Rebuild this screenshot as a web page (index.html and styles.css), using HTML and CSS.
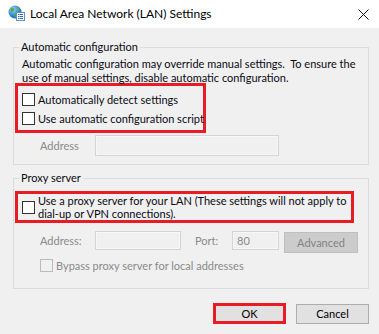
FILE: index.html
```html
<!DOCTYPE html>
<html>
<head>
<meta charset="utf-8">
<link rel="stylesheet" href="styles.css">
</head>
<body>
<div class="window">
  <div class="titlebar">
    <svg class="app-icon" width="17" height="16" viewBox="0 0 17 16">
      <defs>
        <radialGradient id="gl" cx="0.35" cy="0.3" r="0.8">
          <stop offset="0" stop-color="#9fd4f7"/>
          <stop offset="0.6" stop-color="#2f86d0"/>
          <stop offset="1" stop-color="#1a5aa6"/>
        </radialGradient>
      </defs>
      <circle cx="7" cy="7" r="6.5" fill="url(#gl)"/>
      <path d="M3 3.5 C4.5 2.5 6 3 6.5 4.5 C6 6 4.5 6 4 7.5 C3 7 2 5.5 3 3.5 Z" fill="#4caf3c"/>
      <path d="M8 2 C10 2 11.5 3.5 11 5 C10 5.5 9 5 8.5 4 Z" fill="#5bbf48"/>
      <path d="M6 9 C7.5 8.5 8.5 10 8 12 C7 12.5 6 11 6 9 Z" fill="#4caf3c"/>
      <rect x="8.5" y="7.5" width="8" height="8" fill="#fafafa" stroke="#6b8fb8" stroke-width="1"/>
      <rect x="10" y="9" width="1.5" height="1" fill="#2b6cb5"/>
      <rect x="12" y="9" width="3" height="1" fill="#2b6cb5"/>
      <rect x="10" y="11" width="1.5" height="1" fill="#2b6cb5"/>
      <rect x="12" y="11" width="3" height="1" fill="#2b6cb5"/>
      <rect x="10" y="13" width="1.5" height="1" fill="#2b6cb5"/>
      <rect x="12" y="13" width="3" height="1" fill="#2b6cb5"/>
    </svg>
    <span class="title">Local Area Network (LAN) Settings</span>
    <svg class="close" width="11" height="11" viewBox="0 0 11 11">
      <path d="M0.5 0.5 L10.5 10.5 M10.5 0.5 L0.5 10.5" stroke="#111" stroke-width="1"/>
    </svg>
  </div>

  <div class="content">
    <fieldset class="group group-auto">
      <legend>Automatic configuration</legend>
      <p class="desc">Automatic configuration may override manual settings.&nbsp; To ensure the<br>use of manual settings, disable automatic configuration.</p>
      <div class="highlight hl-auto">
        <div class="check"><span class="box"></span><span>Automatically detect settings</span></div>
        <div class="check"><span class="box"></span><span>Use automatic configuration script</span></div>
      </div>
      <div class="field-row row-addr1">
        <span class="lbl lbl-addr">Address</span>
        <span class="input input-addr1"></span>
      </div>
    </fieldset>

    <fieldset class="group group-proxy">
      <legend>Proxy server</legend>
      <div class="highlight hl-proxy">
        <span class="box"></span>
        <span class="proxy-text">Use a proxy server for your LAN (These settings will not apply to<br>dial-up or VPN connections).</span>
      </div>
      <div class="field-row row-addr2">
        <span class="lbl lbl-addr">Address:</span>
        <span class="input input-addr2"></span>
        <span class="lbl lbl-port">Port:</span>
        <span class="input input-port">80</span>
        <span class="btn btn-adv">Advanced</span>
      </div>
      <div class="check check-bypass"><span class="box box-dis"></span><span class="dis">Bypass proxy server for local addresses</span></div>
    </fieldset>

    <div class="buttons">
      <span class="btn btn-ok">OK</span>
      <span class="btn btn-cancel">Cancel</span>
    </div>
  </div>
</div>
</body>
</html>
```

FILE: styles.css
```css
* { box-sizing: border-box; }
html, body { margin: 0; padding: 0; }
body {
  background: #f0f0f0;
  font-family: "Lato", "Liberation Sans", sans-serif;
  font-size: 11px;
  color: #0a0a14;
  width: 379px;
  height: 334px;
  overflow: hidden;
}
.window {
  width: 379px;
  height: 334px;
  background: #f0f0f0;
}
.titlebar {
  height: 28px;
  background: #fff;
  display: flex;
  align-items: center;
  padding-left: 8px;
}
.app-icon { flex: none; margin-top: -2px; }
.title {
  margin-left: 5px;
  font-size: 12px;
  line-height: 16px;
  color: #000;
  flex: 1;
}
.close { flex: none; margin-right: 10px; }

.content {
  padding: 11px 10px 0 13px;
}
.group {
  margin: 0;
  padding: 0 8px 8px 8px;
  border: 1px solid #dcdcdc;
  width: 356px;
  min-width: 0;
}
.group legend {
  padding: 0 2px;
  margin-left: -3px;
  line-height: 16px;
  height: 16px;
}
.desc {
  margin: 2px 0 0 0;
  line-height: 14px;
  white-space: nowrap;
}
.highlight {
  border: 3px solid #e81c24;
  margin-left: -7px;
}
.hl-auto {
  width: 191px;
  margin-top: -2px;
  padding: 4px 4px 2px 4px;
}
.check {
  display: flex;
  align-items: center;
  height: 19px;
  white-space: nowrap;
}
.box {
  flex: none;
  width: 13px;
  height: 13px;
  border: 1px solid #333;
  background: #fff;
  margin-right: 3px;
}
.box-dis {
  border-color: #bcbcbc;
  background: #f0f0f0;
}
.field-row {
  display: flex;
  align-items: center;
}
.row-addr1 { margin-top: 2px; }
.lbl { color: #8a8a8a; white-space: nowrap; }
.lbl-addr { margin-left: 18px; width: 55px; }
.input {
  display: block;
  border: 1px solid #d4d4d4;
  box-shadow: inset 0 0 0 1px #f7f7f7;
  background: #f0f0f0;
  color: #8a8a8a;
}
.input-addr1 { width: 184px; height: 21px; }

.group-proxy { margin-top: 5px; padding-bottom: 13px; }
.hl-proxy {
  width: 339px;
  margin-top: 5px;
  height: 32px;
  display: flex;
  align-items: center;
  padding-left: 4px;
}
.proxy-text { line-height: 13px; white-space: nowrap; }

.row-addr2 { margin-top: 8px; align-items: flex-start; }
.input-addr2 { width: 86px; height: 19px; }
.lbl-port { margin-left: 14px; width: 37px; line-height: 19px; }
.row-addr2 .lbl-addr { line-height: 19px; }
.input-port {
  width: 47px;
  height: 19px;
  line-height: 17px;
  padding-left: 4px;
}
.btn {
  display: flex;
  align-items: center;
  justify-content: center;
  width: 73px;
  height: 20px;
  background: #e1e1e1;
  border: 1px solid #adadad;
  color: #000;
}
.btn-adv {
  margin-left: 5px;
  width: 74px;
  height: 21px;
  margin-top: 1px;
  background: #cccccc;
  border-color: #bfbfbf;
  color: #838383;
}
.check-bypass {
  margin-top: 3px;
  margin-left: 18px;
}
.dis { color: #8a8a8a; }

.buttons {
  display: flex;
  justify-content: flex-end;
  align-items: center;
  gap: 10px;
  margin-top: 14px;
  width: 356px;
}
.btn-ok {
  height: 21px;
  border: 3px solid #e81c24;
}
```
